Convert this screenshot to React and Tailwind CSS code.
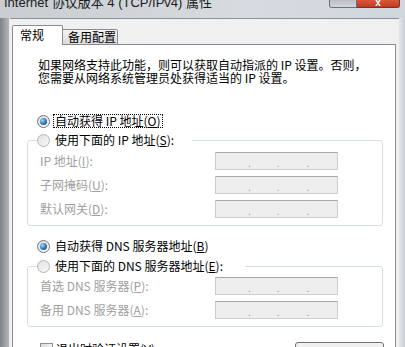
import React from "react";

const cjk = "font-['Noto_Sans_CJK_SC','Noto_Sans_CJK_JP',sans-serif]";

function RadioDot({ checked }) {
  return (
    <span
      className={`flex items-center justify-center w-[13px] h-[13px] rounded-full border shrink-0 ${
        checked
          ? "border-[#6f7378] bg-[linear-gradient(135deg,#d8dadd,#ffffff)]"
          : "border-[#b4b6b9] bg-[linear-gradient(135deg,#e2e3e4,#f6f6f6)]"
      }`}
    >
      {checked && (
        <span className="w-[7px] h-[7px] rounded-full bg-[radial-gradient(circle_at_35%_35%,#a8d8f8,#2a74b6_55%,#123f6e)]" />
      )}
    </span>
  );
}

function Radio({ checked, focus, children }) {
  return (
    <div className="flex items-center h-[14px]">
      <RadioDot checked={checked} />
      <span
        className={`ml-[3px] leading-[12px] px-[1px] ${
          focus ? "border border-dotted border-black" : "border border-transparent"
        }`}
      >
        {children}
      </span>
    </div>
  );
}

function IpBox() {
  return (
    <div className="flex items-end w-[123px] h-[18px] border border-[#cdcdcd] border-t-[#a8a8a8] bg-[#eeeeee] text-[#9a9a9a] text-[10px] leading-[12px]">
      <span className="ml-[32px]">.</span>
      <span className="ml-[26px]">.</span>
      <span className="ml-[27px]">.</span>
    </div>
  );
}

function Row({ label }) {
  return (
    <div className="flex items-center h-[18px]">
      <span className="w-[175px] ml-[3px] text-[#a0a0a0] leading-[12px]">{label}</span>
      <IpBox />
    </div>
  );
}

export default function App() {
  return (
    <div className={`w-[405px] h-[347px] overflow-hidden flex flex-col bg-[#d5dbe1] ${cjk} text-[12px] text-black`}>
      {/* title bar */}
      <div className="flex h-[18px] shrink-0 bg-[linear-gradient(to_right,#c9cdd1,#d6dbe0_60%,#cfd6dd)]">
        <span className="ml-[4px] -mt-[5px] text-[13px] leading-[16px] text-[#1b1b1b] whitespace-nowrap font-['Liberation_Sans','Noto_Sans_CJK_SC',sans-serif]">
          Internet 协议版本 4 (TCP/IPv4) 属性
        </span>
        <div className="ml-auto flex h-[8px] mr-[5px]">
          <div className="w-[28px] h-[8px] border border-t-0 border-[#6c7078] rounded-bl-[3px] bg-[linear-gradient(#b9bec5,#d4d8dd)]" />
          <div className="w-[43px] h-[8px] border border-t-0 border-l-0 border-[#7a3226] rounded-br-[3px] bg-[linear-gradient(#d8563b,#c23a20)] flex justify-center">
            <span className="text-white text-[10px] leading-[6px] font-bold font-['Liberation_Sans',sans-serif]">x</span>
          </div>
        </div>
      </div>

      <div className="flex flex-1 min-h-0">
        {/* left frame */}
        <div className="w-[9px] shrink-0 bg-[linear-gradient(to_right,#7f8286,#9ea2a6_60%,#b5b8bb)]" />
        <div className="w-px shrink-0 bg-[#e6e8ea]" />

        {/* dialog body */}
        <div className="w-[389px] shrink-0 bg-[#f0f0f0] border-t border-[#8e9297] pt-[6px]">
          {/* tabs */}
          <div className="flex items-end ml-[2px] relative z-10 -mb-px">
            <div className="w-[51px] h-[20px] bg-white border border-b-0 border-[#898c95] rounded-t-[2px] pl-[7px] pt-[3px] leading-[12px]">
              常规
            </div>
            <div className="w-[55px] h-[16px] bg-[linear-gradient(#f4f4f4,#dadada)] border border-l-0 border-[#898c95] rounded-tr-[2px] pl-[5px] pt-[1px] leading-[12px]">
              备用配置
            </div>
          </div>

          {/* tab panel */}
          <div className="ml-[2px] w-[384px] h-[400px] bg-white border border-[#898c95] pl-[14px]">
            <p className="pt-[13px] pl-[11px] leading-[13px] whitespace-nowrap">
              如果网络支持此功能，则可以获取自动指派的 IP 设置。否则，
              <br />
              您需要从网络系统管理员处获得适当的 IP 设置。
            </p>

            <div className="mt-[30px] ml-[10px]">
              <Radio checked focus>
                自动获得 IP 地址(<u>O</u>)
              </Radio>
            </div>

            <fieldset className="mt-[5px] w-[356px] border border-[#d5dfe5] rounded-[3px] pl-[9px] pb-[7px]">
              <legend className="pr-[16px]">
                <Radio>
                  使用下面的 IP 地址(<u>S</u>):
                </Radio>
              </legend>
              <div className="mt-[5px] flex flex-col gap-[6px]">
                <Row label={<>IP 地址(<u>I</u>):</>} />
                <Row label={<>子网掩码(<u>U</u>):</>} />
                <Row label={<>默认网关(<u>D</u>):</>} />
              </div>
            </fieldset>

            <div className="mt-[13px] ml-[10px]">
              <Radio checked>
                自动获得 DNS 服务器地址(<u>B</u>)
              </Radio>
            </div>

            <fieldset className="mt-[6px] w-[356px] border border-[#d5dfe5] rounded-[3px] pl-[9px] pb-[7px]">
              <legend className="pr-[20px]">
                <Radio>
                  使用下面的 DNS 服务器地址(<u>E</u>):
                </Radio>
              </legend>
              <div className="mt-[4px] flex flex-col gap-[6px]">
                <Row label={<>首选 DNS 服务器(<u>P</u>):</>} />
                <Row label={<>备用 DNS 服务器(<u>A</u>):</>} />
              </div>
            </fieldset>

            <div className="mt-[15px] flex items-start">
              <div className="flex items-center ml-[13px]">
                <span className="w-[13px] h-[13px] border border-[#8e8f8f] bg-[linear-gradient(135deg,#dcdcdc,#ffffff)]" />
                <span className="ml-[3px] leading-[14px]">退出时验证设置(<u>V</u>)</span>
              </div>
              <button className="ml-auto mr-[11px] w-[89px] h-[22px] rounded-[3px] border border-[#707070] bg-[linear-gradient(#f2f2f2,#ebebeb_50%,#dddddd)] text-[12px] leading-[20px]">
                高级(<u>V</u>)...
              </button>
            </div>
          </div>
        </div>

        {/* right frame */}
        <div className="flex-1 bg-[linear-gradient(to_right,#e4e6e9,#c9ced4)]" />
      </div>
    </div>
  );
}
